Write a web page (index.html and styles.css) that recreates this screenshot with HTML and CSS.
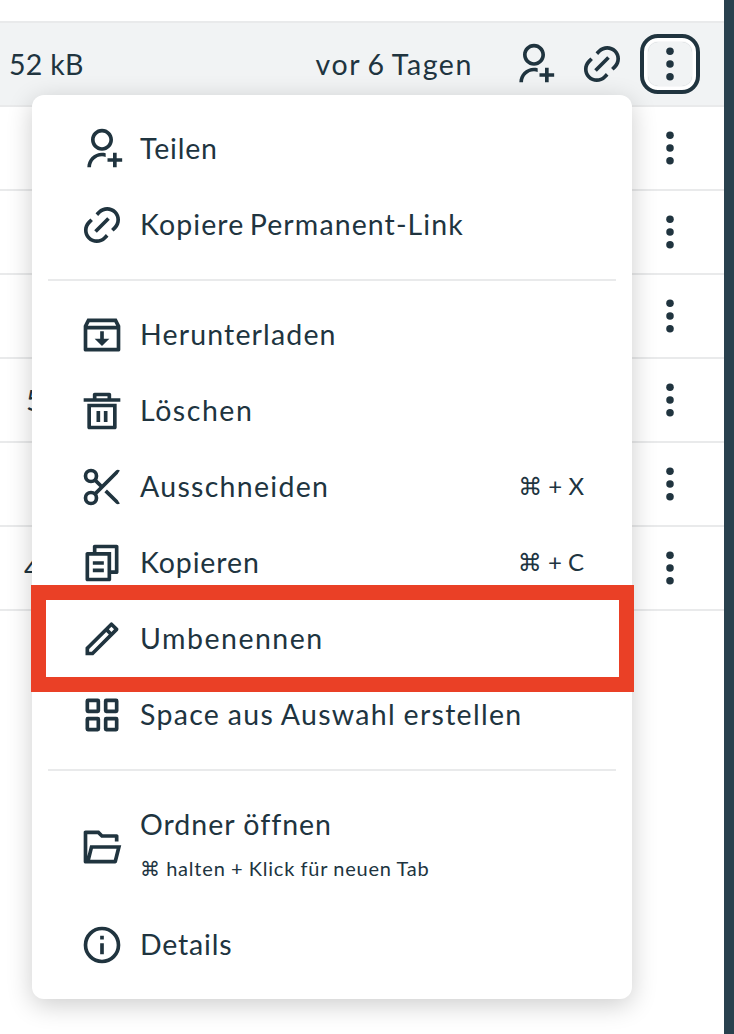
FILE: index.html
```html
<!DOCTYPE html>
<html lang="de">
<head>
<meta charset="utf-8">
<title>Dateien</title>
<link rel="stylesheet" href="styles.css">
</head>
<body>
<svg class="sprite" aria-hidden="true">
  <symbol id="user-add" viewBox="0 0 24 24"><path d="M14 14.252V16.3414C13.3744 16.1203 12.7013 16 12 16C8.68629 16 6 18.6863 6 22H4C4 17.5817 7.58172 14 12 14C12.6906 14 13.3608 14.0875 14 14.252ZM12 13C8.685 13 6 10.315 6 7C6 3.685 8.685 1 12 1C15.315 1 18 3.685 18 7C18 10.315 15.315 13 12 13ZM12 11C14.21 11 16 9.21 16 7C16 4.79 14.21 3 12 3C9.79 3 8 4.79 8 7C8 9.21 9.79 11 12 11ZM18 17V14H20V17H23V19H20V22H18V19H15V17H18Z"/></symbol>
  <symbol id="link" viewBox="0 0 24 24"><path d="M18.3638 15.5355L16.9496 14.1213L18.3638 12.7071C20.3164 10.7545 20.3164 7.58866 18.3638 5.63604C16.4112 3.68341 13.2453 3.68341 11.2927 5.63604L9.87849 7.05025L8.46428 5.63604L9.87849 4.22182C12.6122 1.48815 17.0443 1.48815 19.778 4.22182C22.5117 6.95549 22.5117 11.3876 19.778 14.1213L18.3638 15.5355ZM15.5353 18.364L14.1211 19.7782C11.3875 22.5118 6.95531 22.5118 4.22164 19.7782C1.48797 17.0445 1.48797 12.6123 4.22164 9.87868L5.63585 8.46447L7.05007 9.87868L5.63585 11.2929C3.68323 13.2455 3.68323 16.4113 5.63585 18.364C7.58847 20.3166 10.7543 20.3166 12.7069 18.364L14.1211 16.9497L15.5353 18.364ZM14.8282 7.75736L16.2425 9.17157L9.17139 16.2426L7.75717 14.8284L14.8282 7.75736Z"/></symbol>
  <symbol id="more" viewBox="0 0 24 24"><circle cx="12" cy="5" r="2.05"/><circle cx="12" cy="12" r="2.05"/><circle cx="12" cy="19" r="2.05"/></symbol>
  <symbol id="archive" viewBox="0 0 24 24"><path d="M20 3L22 7V20C22 20.5523 21.5523 21 21 21H3C2.44772 21 2 20.5523 2 20V7.00353L4 3H20ZM20 9H4V19H20V9ZM13 10V14H16L12 18L8 14H11V10H13ZM18.7639 5H5.23656L4.23744 7H19.7639L18.7639 5Z"/></symbol>
  <symbol id="bin" viewBox="0 0 24 24"><path d="M4 8H20V21C20 21.5523 19.5523 22 19 22H5C4.44772 22 4 21.5523 4 21V8ZM6 10V20H18V10H6ZM9 12H11V18H9V12ZM13 12H15V18H13V12ZM7 5V3C7 2.44772 7.44772 2 8 2H16C16.5523 2 17 2.44772 17 3V5H22V7H2V5H7ZM9 4V5H15V4H9Z"/></symbol>
  <symbol id="scissors" viewBox="0 0 24 24"><g fill="none" stroke="currentColor" stroke-width="2"><circle cx="6" cy="6" r="3"/><circle cx="6" cy="18" r="3"/><path d="M8.1 8.1L12.3 12.3M8.1 15.9L20.2 3.8Q20.6 3.4 21.2 3.8M14 14.1L20.2 20.2Q20.6 20.6 21.2 20.2"/></g></symbol>
  <symbol id="copy" viewBox="0 0 24 24"><path d="M6.9998 6V3C6.9998 2.44772 7.44752 2 7.9998 2H19.9998C20.5521 2 20.9998 2.44772 20.9998 3V17C20.9998 17.5523 20.5521 18 19.9998 18H16.9998V20.9991C16.9998 21.5519 16.5499 22 15.993 22H4.00666C3.45059 22 3 21.5554 3 20.9991L3.0026 7.00087C3.0027 6.44811 3.45264 6 4.00942 6H6.9998ZM5.00242 8L5.00019 20H14.9998V8H5.00242ZM8.9998 6H16.9998V16H18.9998V4H8.9998V6ZM7 11H13V13H7V11ZM7 15H13V17H7V15Z"/></symbol>
  <symbol id="pencil" viewBox="0 0 24 24"><path d="M15.7279 9.57627L14.3137 8.16206L5 17.4758V18.89H6.41421L15.7279 9.57627ZM17.1421 8.16206L18.5563 6.74785L17.1421 5.33363L15.7279 6.74785L17.1421 8.16206ZM7.24264 20.89H3V16.6473L16.435 3.21231C16.8256 2.82179 17.4587 2.82179 17.8492 3.21231L20.6777 6.04074C21.0682 6.43126 21.0682 7.06443 20.6777 7.45495L7.24264 20.89Z"/></symbol>
  <symbol id="grid" viewBox="0 0 24 24"><g fill="none" stroke="currentColor" stroke-width="2"><rect x="4" y="4" width="6" height="6" rx=".3"/><rect x="14" y="4" width="6" height="6" rx=".3"/><rect x="4" y="14" width="6" height="6" rx=".3"/><rect x="14" y="14" width="6" height="6" rx=".3"/></g></symbol>
  <symbol id="folder" viewBox="0 0 24 24"><path d="M3 21C2.44772 21 2 20.5523 2 20V4C2 3.44772 2.44772 3 3 3H10.4142L12.4142 5H20C20.5523 5 21 5.44772 21 6V9H19V7H11.5858L9.58579 5H4V16.998L5.5 11H22.5L20.1894 20.2425C20.0781 20.6877 19.6781 21 19.2192 21H3ZM19.9384 13H7.06155L5.56155 19H18.4384L19.9384 13Z"/></symbol>
  <symbol id="info" viewBox="0 0 24 24"><circle cx="12" cy="12" r="9" fill="none" stroke="currentColor" stroke-width="2"/><path d="M11 7h2v2h-2zM11 11h2v6h-2z"/></symbol>
</svg>
<div class="app">
  <main class="files">
    <div class="row row-active">
      <span class="size">52 kB</span>
      <span class="date">vor 6 Tagen</span>
      <svg class="icon act-share"><use href="#user-add"/></svg>
      <svg class="icon act-link"><use href="#link"/></svg>
      <button class="more-btn"><svg class="icon"><use href="#more"/></svg></button>
    </div>
    <div class="row"><svg class="icon dots"><use href="#more"/></svg></div>
    <div class="row"><svg class="icon dots"><use href="#more"/></svg></div>
    <div class="row"><svg class="icon dots"><use href="#more"/></svg></div>
    <div class="row"><span class="size size-five">5</span><svg class="icon dots"><use href="#more"/></svg></div>
    <div class="row"><svg class="icon dots"><use href="#more"/></svg></div>
    <div class="row"><span class="size size-four">4</span><svg class="icon dots"><use href="#more"/></svg></div>
  </main>
  <div class="edge"></div>
</div>

<nav class="menu">
  <div class="item"><svg class="icon"><use href="#user-add"/></svg><span class="label teilen">Teilen</span></div>
  <div class="item"><svg class="icon"><use href="#link"/></svg><span class="label permalink">Kopiere Permanent-Link</span></div>
  <hr class="divider">
  <div class="item"><svg class="icon"><use href="#archive"/></svg><span class="label download">Herunterladen</span></div>
  <div class="item"><svg class="icon"><use href="#bin"/></svg><span class="label delete">Löschen</span></div>
  <div class="item"><svg class="icon"><use href="#scissors"/></svg><span class="label cut">Ausschneiden</span><span class="keys"><span class="cmd">⌘</span> + X</span></div>
  <div class="item"><svg class="icon"><use href="#copy"/></svg><span class="label copy">Kopieren</span><span class="keys"><span class="cmd">⌘</span> + C</span></div>
  <div class="item"><svg class="icon"><use href="#pencil"/></svg><span class="label rename">Umbenennen</span></div>
  <div class="item"><svg class="icon"><use href="#grid"/></svg><span class="label space">Space aus Auswahl erstellen</span></div>
  <hr class="divider">
  <div class="item item-tall"><svg class="icon"><use href="#folder"/></svg><div class="stack"><span class="label open">Ordner öffnen</span><span class="hint"><span class="cmd">⌘</span> halten + Klick für neuen Tab</span></div></div>
  <div class="item"><svg class="icon"><use href="#info"/></svg><span class="label details">Details</span></div>
</nav>
<div class="highlight"></div>
</body>
</html>
```
FILE: styles.css
```css
* { box-sizing: border-box; }
body {
  margin: 0;
  width: 734px;
  height: 1034px;
  overflow: hidden;
  position: relative;
  background: #fff;
  color: #20343f;
  font: 28.5px/38px Lato, "Noto Sans", sans-serif;
  font-variant-ligatures: none;
  white-space: nowrap;
}
.sprite { display: none; }
.icon { width: 44px; height: 44px; flex: none; fill: currentColor; display: block; }

.app { display: flex; height: 100%; }
.files { flex: 1; padding-top: 21px; }
.edge { width: 10px; background: #29414e; }
.row {
  height: 84px;
  padding: 0 32px 0 10px;
  border-bottom: 2px solid #e9eaeb;
  display: flex;
  align-items: center;
}
.row-active {
  height: 86px;
  padding: 0 24px 0 9px;
  border-top: 2px solid #e9eaeb;
  background: #f1f3f4;
}
.size { letter-spacing: .3px; }
.date { margin-left: auto; margin-right: 39px; letter-spacing: 1.6px; word-spacing: -2px; }
.act-link { margin: 0 16px 0 24px; }
.dots { margin-left: auto; }
.size-five { margin-left: 16px; }
.size-four { margin-left: 14px; }
.more-btn {
  width: 60px;
  height: 60px;
  padding: 4px;
  border: 4px solid #20343f;
  border-radius: 18px;
  background: #fff;
  color: inherit;
}
.more-btn .icon { background: #f1f3f4; border-radius: 10px; box-shadow: 0 0 1px rgba(32, 52, 63, .35); }

.menu {
  position: absolute;
  left: 32px;
  top: 95px;
  width: 600px;
  height: 904px;
  padding: 16px;
  border-radius: 12px;
  background: #fff;
  box-shadow: 0 6px 26px rgba(0, 0, 0, .2);
}
.item { height: 76px; padding: 0 32px; display: flex; align-items: center; gap: 16px; }
.item-tall { height: 120px; }
.stack { display: flex; flex-direction: column; gap: 6px; padding-bottom: 2px; }
.divider { height: 2px; margin: 16px 0; border: 0; background: #e9eaeb; }
.label { letter-spacing: 1px; }
.item > .label, .keys { padding-bottom: 2px; }
.teilen { letter-spacing: .8px; }
.permalink { letter-spacing: 1.1px; word-spacing: -3px; }
.download { letter-spacing: 1.15px; }
.delete { letter-spacing: 1.55px; }
.cut { letter-spacing: 1.3px; }
.copy { letter-spacing: .9px; }
.rename { letter-spacing: 1.5px; }
.space { letter-spacing: 1.3px; word-spacing: -1px; }
.details { letter-spacing: .8px; }
.keys { margin-left: auto; font-size: 24px; }
.hint { font-size: 20px; letter-spacing: .8px; word-spacing: -.6px; }
.cmd { font-family: "DejaVu Sans", sans-serif; font-size: 1em; line-height: 1; }

.highlight {
  position: absolute;
  left: 31px;
  top: 585px;
  width: 603px;
  height: 107px;
  border: 15px solid #ea4026;
}
```
